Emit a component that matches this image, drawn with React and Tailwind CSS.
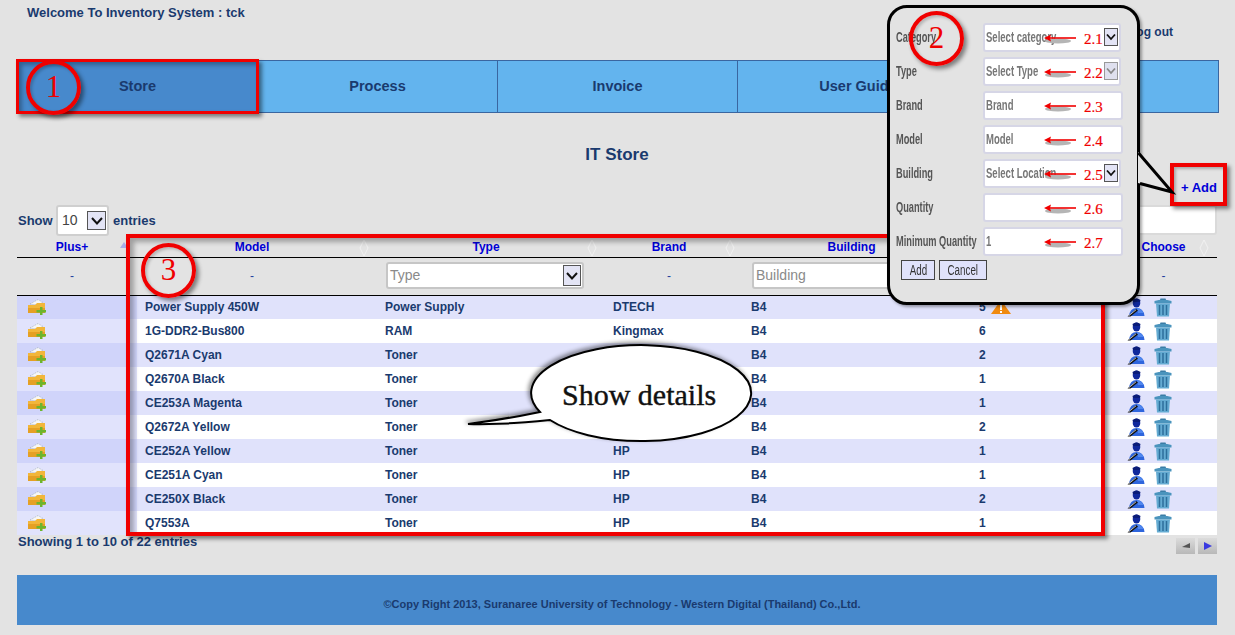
import React from "react";

const rows = [
  ["Power Supply 450W", "Power Supply", "DTECH", "B4", "5"],
  ["1G-DDR2-Bus800", "RAM", "Kingmax", "B4", "6"],
  ["Q2671A Cyan", "Toner", "HP", "B4", "2"],
  ["Q2670A Black", "Toner", "HP", "B4", "1"],
  ["CE253A Magenta", "Toner", "HP", "B4", "1"],
  ["Q2672A Yellow", "Toner", "HP", "B4", "2"],
  ["CE252A Yellow", "Toner", "HP", "B4", "1"],
  ["CE251A Cyan", "Toner", "HP", "B4", "1"],
  ["CE250X Black", "Toner", "HP", "B4", "2"],
  ["Q7553A", "Toner", "HP", "B4", "1"],
];

const fields = [
  { label: "Category", text: "Select category", select: true, num: "2.1", w: "w-[138px]" },
  { label: "Type", text: "Select Type", select: true, faded: true, num: "2.2", w: "w-[138px]" },
  { label: "Brand", text: "Brand", num: "2.3", w: "w-[140px]" },
  { label: "Model", text: "Model", num: "2.4", w: "w-[140px]" },
  { label: "Building", text: "Select Location", select: true, num: "2.5", w: "w-[138px]" },
  { label: "Quantity", text: "", num: "2.6", w: "w-[140px]" },
  { label: "Minimum Quantity", text: "1", num: "2.7", w: "w-[140px]" },
];

const FolderPlus = () => (
  <svg className="-mt-[1px]" width="20" height="17" viewBox="0 0 20 17">
    <path d="M3 6 L11 1.500 L16 4.500 L10 7Z" fill="#f6f6f6" stroke="#8a9aa8" strokeWidth="0.600" strokeDasharray="1 1" />
    <path d="M1 7 L8 7 L10 5 L18 5 L18 15 L1 15Z" fill="#f2b63a" />
    <path d="M1 10 L18 10 L18 15 L1 15Z" fill="#e5a024" />
    <path d="M13 9h2.500v3H19v2.500h-3.500V17H13v-2.500H9.500V12H13z" fill="#6cb52d" />
  </svg>
);

const UserEdit = () => (
  <svg width="18" height="19" viewBox="0 0 18 19">
    <ellipse cx="9.500" cy="5" rx="3.800" ry="4.500" fill="#10289c" />
    <path d="M5.500 2 Q9.500 -1 13.500 2 L13 4 L6 4Z" fill="#0a1c78" />
    <path d="M2 18 Q3 10 9.500 10 Q16.500 10 17.500 18Z" fill="#2f66dd" />
    <path d="M10 10 Q15 11 16.500 15 L11 15Z" fill="#4f86ee" />
    <path d="M0.500 18.500 L9 11 L11 12.500 L3.500 18.500Z" fill="#111" />
    <path d="M2 17.500 L9 11.800" stroke="#e8e8e8" strokeWidth="0.800" />
  </svg>
);

const Trash = () => (
  <svg width="18" height="19" viewBox="0 0 18 19">
    <path d="M0.500 3 Q9 0.500 17.500 3 L17.500 5.500 L0.500 5.500Z" fill="#4a94bd" />
    <path d="M6 2 L6.500 0.500 L11.500 0.500 L12 2Z" fill="#3a7da6" />
    <path d="M2 5.500 L16 5.500 L15 18.500 L3 18.500Z" fill="#64abd2" />
    <path d="M5.500 7v10M9 7v10M12.500 7v10" stroke="#2d6f9c" strokeWidth="1.500" />
  </svg>
);

const Warning = () => (
  <svg width="20" height="14" viewBox="0 0 20 14">
    <path d="M10 0 L20 14 L0 14Z" fill="#f08a10" />
    <path d="M9 4h2v6H9zM9 11h2v2H9z" fill="#fff" />
  </svg>
);

const SelectArrow = ({ faded }) => (
  <span className={`flex items-center justify-center border ${faded ? "border-[#999] bg-[#dfe0ee]" : "border-[#555] bg-[#e3e4f5]"} w-[14px] h-[18px] flex-shrink-0`}>
    <svg width="10" height="8" viewBox="0 0 10 8">
      <path d="M1 1.500 L5 6 L9 1.500" fill="none" stroke={faded ? "#888" : "#111"} strokeWidth="1.800" />
    </svg>
  </span>
);

const SortMark = ({ up }) => (
  <svg className="absolute right-[8px] top-[2px]" width="10" height="18" viewBox="0 0 10 18">
    {up ? (
      <path d="M5 3 L9 9 L1 9Z" fill="#a9aee8" />
    ) : (
      <path d="M5 1 L9 9 L5 17 L1 9Z" fill="none" stroke="#f4f4f4" strokeWidth="0.800" />
    )}
  </svg>
);

const FilterBox = ({ text }) => (
  <div className="flex items-center justify-between w-[198px] h-[27px] ml-[1px] mb-[1px] bg-white border-2 border-[#c6c6c6] rounded-[3px] pl-[2px] pr-[1px] text-[14px] font-normal text-[#8a8a8a]">
    <span>{text}</span>
    <span className="flex items-center justify-center w-[18px] h-[21px] border border-[#555] bg-[#e3e4f5]">
      <svg width="12" height="8" viewBox="0 0 12 8">
        <path d="M1 1 L6 6.500 L11 1" fill="none" stroke="#111" strokeWidth="2" />
      </svg>
    </span>
  </div>
);

const Circle = ({ className, label }) => (
  <div className={`absolute w-[55px] h-[55px] rounded-full border-[4px] border-[#f00000] shadow-[3px_3px_4px_rgba(0,0,0,0.45),inset_2px_2px_3px_rgba(0,0,0,0.2)] flex items-center justify-center font-['Liberation_Serif',serif] font-normal text-[31px] text-[#f00000] ${className}`}>
    {label}
  </div>
);

const FieldArrow = () => (
  <svg className="flex-shrink-0" width="34" height="12" viewBox="0 0 34 12">
    <ellipse cx="14" cy="8" rx="13" ry="2.500" fill="#b5b5b5" />
    <path d="M4 5 L32 5" stroke="#f00000" strokeWidth="1.600" />
    <path d="M0 5 L7 1.500 L6 5 L7 8.500Z" fill="#f00000" />
  </svg>
);

function Popup() {
  return (
    <div className="absolute left-[887px] top-[5px] w-[253px] h-[300px] bg-[#e3e3e3] border-[3px] border-black rounded-[20px] pl-[6px] pt-[15px] shadow-[2px_2px_3px_rgba(0,0,0,0.35)]">
      <div className="flex flex-col gap-[5px]">
        {fields.map((f) => (
          <div key={f.label} className="flex items-center h-[29px]">
            <span className="w-[87px] whitespace-nowrap text-[14px] font-bold text-[#555] scale-x-[0.66] origin-left">{f.label}</span>
            <div className={`relative flex items-center flex-shrink-0 h-[29px] ${f.w} bg-white border-2 border-[#d6d6e6] rounded-[3px] pl-[1px] pr-[1px] text-[14px] text-[#777]`}>
              <span className="w-[70px] whitespace-nowrap scale-x-[0.68] origin-left">{f.text}</span>
              <span className="absolute left-[59px] top-[8px]"><FieldArrow /></span>
              <span className="absolute left-[99px] top-[3px] font-['Liberation_Serif',serif] font-normal text-[15px] text-[#f00000] [-webkit-text-stroke:0.2px_#f00000]">{f.num}</span>
              {f.select && <span className="absolute right-[1px] top-[3px]"><SelectArrow faded={f.faded} /></span>}
            </div>
          </div>
        ))}
      </div>
      <div className="flex gap-[4px] ml-[5px] mt-[4px]">
        <div className="w-[34px] h-[20px] flex items-center justify-center bg-[#e0e2fb] border border-[#444] text-[14px] font-normal text-[#333]"><span className="scale-x-[0.7]">Add</span></div>
        <div className="w-[48px] h-[20px] flex items-center justify-center bg-[#e0e2fb] border border-[#444] text-[14px] font-normal text-[#333]"><span className="scale-x-[0.7]">Cancel</span></div>
      </div>
    </div>
  );
}

export default function App() {
  return (
    <div className="relative w-[1235px] h-[635px] overflow-hidden bg-[#e3e3e3] font-['Liberation_Sans',Arial,sans-serif] text-[12px] font-bold text-[#1a3a6e]">
      <div className="pl-[17px]">
        <div className="flex justify-between h-[60px] w-[1200px]">
          <span className="ml-[10px] mt-[5px] text-[13px] leading-[15px]">Welcome To Inventory System : tck</span>
          <span className="mt-[25px] mr-[44px] leading-[15px]">Log out</span>
        </div>

        <nav className="flex w-[1202px] h-[53px] bg-[#63b4ee] border border-[#3a66a0] text-[14.5px]">
          <div className="w-[240px] flex items-center justify-center bg-[#4789cc] border-r border-[#3a66a0]">Store</div>
          <div className="w-[240px] flex items-center justify-center border-r border-[#3a66a0]">Process</div>
          <div className="w-[240px] flex items-center justify-center border-r border-[#3a66a0]">Invoice</div>
          <div className="w-[240px] flex items-center justify-center">User Guide</div>
          <div className="flex-1" />
        </nav>

        <div className="w-[1200px] h-[92px] pt-[33px]">
          <h1 className="text-center text-[17px] leading-[18px]">IT Store</h1>
          <div className="mt-[16px] text-right text-[13px] leading-[15px] text-[#0000d8]">+ Add</div>
        </div>

        <div className="flex justify-between w-[1200px] h-[32px] text-[13px]">
          <div className="flex items-start">
            <span className="ml-[1px] mt-[6px] mr-[4px] w-[34px]">Show</span>
            <div className="flex items-center justify-between w-[53px] h-[31px] bg-white border-2 border-[#cfcfcf] rounded-[3px] pl-[4px] pr-[1px] text-[14px] font-normal text-[#444]">
              <span>10</span>
              <span className="flex items-center justify-center w-[19px] h-[19px] border border-[#555] bg-[#e3e4f5]">
                <svg width="12" height="8" viewBox="0 0 12 8">
                  <path d="M1 1 L6 6.500 L11 1" fill="none" stroke="#111" strokeWidth="2" />
                </svg>
              </span>
            </div>
            <span className="mt-[6px] ml-[4px]">entries</span>
          </div>
          <div className="w-[90px] h-[30px] bg-white border-2 border-[#dadada] rounded-[3px]" />
        </div>

        <table className="table-fixed w-[1200px] border-collapse">
          <colgroup>
            <col className="w-[120px]" />
            <col className="w-[240px]" />
            <col className="w-[228px]" />
            <col className="w-[138px]" />
            <col className="w-[227px]" />
            <col className="w-[150px]" />
            <col className="w-[97px]" />
          </colgroup>
          <thead>
            <tr className="h-[20px] border-b border-black text-[#0000d8]">
              {["Plus+", "Model", "Type", "Brand", "Building", "Quantity", "Choose"].map((h, i) => (
                <th key={h} className="relative pl-[8px] pr-[18px] font-bold text-center">
                  {h}
                  <SortMark up={i === 0} />
                </th>
              ))}
            </tr>
            <tr className="h-[38px] border-b border-black font-normal text-[#1f3f9f]">
              <td className="pr-[10px] text-center">-</td>
              <td className="pr-[10px] text-center">-</td>
              <td className="pl-[8px]"><FilterBox text="Type" /></td>
              <td className="pr-[10px] text-center">-</td>
              <td className="pl-[8px]"><FilterBox text="Building" /></td>
              <td className="pr-[10px] text-center">-</td>
              <td className="pr-[10px] text-center">-</td>
            </tr>
          </thead>
          <tbody>
            {rows.map((r, i) => (
              <tr key={r[0]} className={`h-[24px] ${i % 2 === 0 ? "bg-[#e0e2fb]" : "bg-white"}`}>
                <td className={`pl-[10px] ${i % 2 === 0 ? "bg-[#d0d4fa]" : "bg-[#e1e3fc]"}`}><FolderPlus /></td>
                <td className="pl-[8px] whitespace-nowrap">{r[0]}</td>
                <td className="pl-[8px]">{r[1]}</td>
                <td className="pl-[8px]">{r[2]}</td>
                <td className="pl-[8px]">{r[3]}</td>
                <td className="pl-[9px]">
                  <span className="inline-flex items-center gap-[5px]">
                    {r[4]}
                    {i === 0 && <Warning />}
                  </span>
                </td>
                <td className="pl-[7px]">
                  <div className="flex items-center gap-[9px]">
                    <UserEdit />
                    <Trash />
                  </div>
                </td>
              </tr>
            ))}
          </tbody>
        </table>

        <div className="flex justify-between w-[1200px] h-[40px]">
          <span className="ml-[1px] text-[13px] leading-[14px]">Showing 1 to 10 of 22 entries</span>
          <div className="flex gap-[3px] mt-[3px]">
            <div className="flex items-center justify-center w-[19px] h-[16px] bg-gradient-to-b from-[#dcdcdc] to-[#b8b8b8]">
              <svg width="10" height="8" viewBox="0 0 10 8"><path d="M1 5 L9 1 L9 6Z" fill="#555" /></svg>
            </div>
            <div className="flex items-center justify-center w-[19px] h-[16px] bg-gradient-to-b from-[#dcdcdc] to-[#b8b8b8]">
              <svg width="10" height="10" viewBox="0 0 10 10"><path d="M1 1 L9 5 L1 9Z" fill="#3a3ae0" /></svg>
            </div>
          </div>
        </div>

        <footer className="flex items-center justify-center w-[1200px] h-[50px] pt-[9px] pl-[10px] bg-[#4789cc] text-[11px] text-[#1a3a6e]">
          ©Copy Right 2013, Suranaree University of Technology - Western Digital (Thailand) Co.,Ltd.
        </footer>
      </div>

      {/* annotations drawn over the page */}
      <div className="absolute left-[16px] top-[59px] w-[243px] h-[55px] border-[3px] border-[#f00000] shadow-[3px_3px_4px_rgba(0,0,0,0.45),inset_3px_3px_4px_rgba(0,0,0,0.3)]" />
      <Circle className="left-[26px] top-[60px]" label="1" />

      <div className="absolute left-[126px] top-[234px] w-[979px] h-[302px] border-[4px] border-[#f00000] shadow-[3px_3px_4px_rgba(0,0,0,0.45),inset_4px_4px_5px_rgba(0,0,0,0.3)]" />
      <Circle className="left-[141px] top-[243px]" label="3" />

      <div className="absolute left-[1170px] top-[163px] w-[57px] h-[43px] border-[4px] border-[#f00000] shadow-[3px_3px_4px_rgba(0,0,0,0.45),inset_2px_2px_3px_rgba(0,0,0,0.25)]" />

      <Popup />
      <svg className="absolute left-[1130px] top-[145px]" width="50" height="55" viewBox="0 0 50 55">
        <path d="M8 7 L43 47 L8 38Z" fill="#e3e3e3" />
        <path d="M8.500 8 L42 47 L10 38.500" fill="none" stroke="#000" strokeWidth="3" />
      </svg>
      <Circle className="left-[909px] top-[11px]" label="2" />

      {/* speech bubble */}
      <svg className="absolute left-[462px] top-[341px] drop-shadow-[-2px_-2px_2px_rgba(0,0,0,0.45)]" width="300" height="110" viewBox="0 0 300 110">
        <path d="M78 71 A110 48 0 1 1 88 79 Q40 84 6 83 Q45 78 78 71Z" fill="#fff" stroke="#000" strokeWidth="2" />
      </svg>
      <span className="absolute left-[562px] top-[378px] font-['Liberation_Serif',serif] text-[30px] leading-[34px] font-normal text-[#111] [-webkit-text-stroke:0.4px_#111]">Show details</span>
    </div>
  );
}
